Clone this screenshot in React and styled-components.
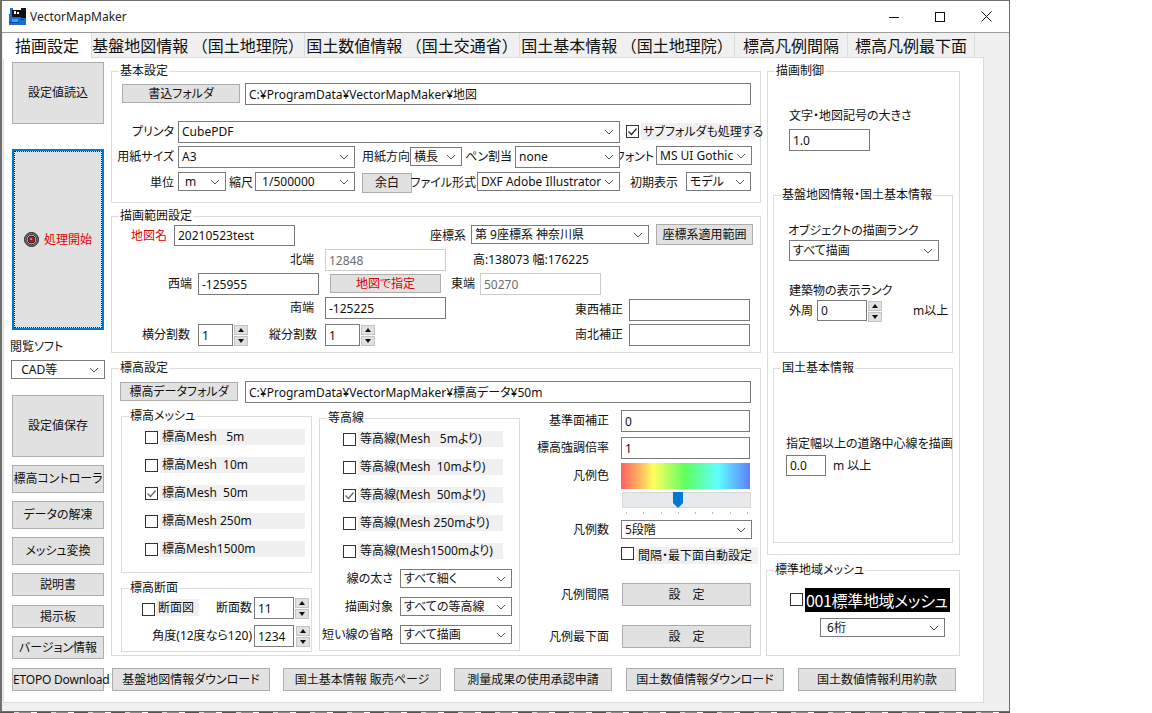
import React from "react";
import styled, { createGlobalStyle, css } from "styled-components";

const Global = createGlobalStyle`
  html, body { margin: 0; padding: 0; background: #fff; }
  body { font: 12px/16px "Noto Sans", "Noto Sans CJK JP", sans-serif; color: #111; font-feature-settings: "palt"; }
  * { box-sizing: border-box; }
`;

const place = css`
  flex: none;
  margin-left: ${(p) => p.$ml || 0}px;
  margin-top: ${(p) => p.$mt || 0}px;
`;

const Window = styled.div`
  width: 1010px; height: 712px;
  border: 1px solid #6e6e6e;
  border-left-width: 2px;
  background: #f0f0f0;
  display: flex; flex-direction: column;
  margin-left: 0;
`;
const NoiseStrip = styled.div`
  width: 1010px; height: 1px;
  background: repeating-linear-gradient(90deg, #555 0 14px, #ddd 14px 19px, #888 19px 31px, #fff 31px 37px);
`;
const TitleBar = styled.div`
  height: 32px; background: #fff; border-bottom: 1px solid #9c9c9c;
  display: flex; align-items: center; padding-left: 7px; flex: none;
`;
const TitleText = styled.span`
  margin-left: 4px; font-size: 12px; color: #222; flex: 1;
`;
const WinBtn = styled.span`
  width: 46px; height: 31px; display: flex; align-items: center; justify-content: center; flex: none;
`;
const TabStrip = styled.div`
  height: 24px; display: flex; padding-left: 1px; flex: none;
`;
const Tab = styled.div`
  width: ${(p) => p.$w}px;
  height: ${(p) => (p.$active ? 26 : 24)}px;
  background: ${(p) => (p.$active ? "#fff" : "#f0f0f0")};
  border-right: 1px solid #dcdcdc;
  font-family: "Noto Sans CJK JP", sans-serif;
  font-feature-settings: normal;
  font-size: 16px; line-height: 24px; text-align: center; white-space: pre;
  position: relative; z-index: 1; color: #111;
`;
const Panel = styled.div`
  width: 981px; height: 646px; margin-left: 1px; background: #fff;
  border: 1px solid #dcdcdc; padding: 4px 0 0 8px; flex: none;
`;
const Upper = styled.div`
  display: flex; height: 598px;
`;
const LeftCol = styled.div`
  width: 94px; margin-left: -1px; display: flex; flex-direction: column; flex: none;
`;
const CenterCol = styled.div`
  width: 650px; margin-left: 6px; padding-top: 9px; flex: none;
`;
const RightCol = styled.div`
  width: 194px; margin-left: 5px; padding-top: 9px; flex: none;
`;
const BottomBar = styled.div`
  display: flex; margin-top: 8px;
`;
const Btn = styled.button`
  ${place};
  width: ${(p) => p.$w}px; height: ${(p) => p.$h}px;
  background: #e1e1e1; border: 1px solid #adadad; padding: 0;
  font: inherit; font-size: 12px; color: ${(p) => (p.$red ? "#e00000" : "#111")};
  font-feature-settings: "palt"; letter-spacing: ${(p) => p.$ls || 0}px; white-space: pre;
`;
const StartBtn = styled.button`
  ${place};
  width: 92px; height: 181px; background: #e1e1e1; border: 2px solid #0078d7;
  outline: 1px dotted #222; outline-offset: -3px; padding: 0;
  display: flex; align-items: center; justify-content: center;
  font: inherit; color: #e00000; font-feature-settings: "palt"; 
`;
const StartText = styled.span`
  margin-left: 5px; width: 48px; white-space: nowrap;
`;
const Field = styled.div`
  ${place};
  position: relative;
  width: ${(p) => p.$w}px; height: ${(p) => p.$h}px;
  border: 1px solid #dcdcdc;
  padding-top: ${(p) => p.$pt || 0}px;
`;
const Legend = styled.span`
  position: absolute; top: -9px; left: ${(p) => p.$left ?? 7}px;
  background: #fff; padding: 0 1px; white-space: nowrap; letter-spacing: ${(p) => p.$ls || 0}px;
`;
const Row = styled.div`
  display: flex; align-items: flex-start;
  height: ${(p) => p.$h}px;
  margin-top: ${(p) => p.$mt || 0}px;
  margin-left: ${(p) => p.$ml || 0}px;
`;
const Label = styled.span`
  ${place};
  width: ${(p) => p.$w}px; height: ${(p) => p.$h ? p.$h + "px" : "100%"};
  display: flex; align-items: center;
  justify-content: ${(p) => (p.$left ? "flex-start" : "flex-end")};
  white-space: pre; letter-spacing: ${(p) => p.$ls || 0}px;
  color: ${(p) => (p.$red ? "#e00000" : "inherit")};
`;
const Plain = styled.div`
  ${place};
  height: 16px; white-space: pre; letter-spacing: ${(p) => p.$ls || 0}px;
`;
const Input = styled.input`
  ${place};
  width: ${(p) => p.$w}px; height: ${(p) => p.$h || 22}px;
  border: 1px solid ${(p) => (p.$dis ? "#cccccc" : "#7a7a7a")};
  background: #fff; padding: 0 0 0 3px; outline: none;
  font: inherit; color: ${(p) => (p.$dis ? "#6d6d6d" : "#111")};
  font-feature-settings: "palt"; letter-spacing: ${(p) => p.$ls || 0}px;
`;
const SelectBox = styled.div`
  ${place};
  width: ${(p) => p.$w}px; height: ${(p) => p.$h || 19}px;
  border: 1px solid #7a7a7a; background: #fff;
  display: flex; align-items: center; padding-left: 3px;
  white-space: pre; position: relative; letter-spacing: ${(p) => p.$ls || 0}px;
`;
const ChevronWrap = styled.svg`
  position: absolute; right: 5px; top: 50%; margin-top: -3px;
`;
const Select = ({ children, ...rest }) => (
  <SelectBox {...rest}>
    {children}
    <ChevronWrap width="10" height="6" viewBox="0 0 10 6">
      <path d="M1 1l4 4 4-4" fill="none" stroke="#555" strokeWidth="1" />
    </ChevronWrap>
  </SelectBox>
);
const SpinBox = styled.div`
  ${place};
  width: 14px; height: 22px; display: flex; flex-direction: column; gap: 1px; padding-top: 1px;
`;
const SpinPart = styled.span`
  flex: 1; background: #e1e1e1; border: 1px solid #c4c4c4;
  display: flex; align-items: center; justify-content: center;
`;
const Tri = styled.i`
  width: 0; height: 0; border-left: 3.5px solid transparent; border-right: 3.5px solid transparent;
  ${(p) => (p.$up ? "border-bottom: 4px solid #111;" : "border-top: 4px solid #111;")}
`;
const Spin = (props) => (
  <SpinBox {...props}>
    <SpinPart><Tri $up /></SpinPart>
    <SpinPart><Tri /></SpinPart>
  </SpinBox>
);
const CheckBox = styled.svg`
  ${place};
  display: block;
`;
const Check = ({ on, tone = "#666", ...rest }) => (
  <CheckBox width="13" height="13" viewBox="0 0 13 13" {...rest}>
    <rect x="0.5" y="0.5" width="12" height="12" fill="#fff" stroke="#333" />
    {on && <path d="M2.5 6.5l3 3 5-6" fill="none" stroke={tone} strokeWidth="1.2" />}
  </CheckBox>
);
const CheckLabel = styled.span`
  ${place};
  width: ${(p) => p.$w}px; height: ${(p) => p.$h || 16}px;
  background: #f0f0f0; padding-left: 2px;
  display: flex; align-items: center; white-space: pre; letter-spacing: ${(p) => p.$ls || 0}px;
`;
const CheckRow = styled.div`
  display: flex; align-items: center; height: 16px; padding-left: 23px;
  margin-bottom: 12px;
`;
const Gradient = styled.div`
  ${place};
  width: 129px; height: 26px;
  background: linear-gradient(90deg, #ff5f5f 0%, #ffa75f 12%, #ffff5f 25%, #5fff5f 50%, #5fffff 75%, #5f7fff 100%);
`;
const Track = styled.div`
  ${place};
  position: relative; width: 129px; height: 16px; background: #e7e9ea; border: 1px solid #d6d6d6;
`;
const Thumb = styled.svg`
  position: absolute; left: 50px; top: -1px;
`;
const Ticks = styled.div`
  ${place};
  width: 122px; height: 2px; display: flex; justify-content: space-between;
`;
const TickMark = styled.i`
  width: 1px; height: 2px; background: #bdbdbd;
`;
const BlackLabel = styled.div`
  ${place};
  width: 145px; height: 24px; background: #000; color: #fff;
  font-size: 16px; line-height: 24px; padding-left: 1px; white-space: pre;
  font-family: "Noto Sans CJK JP", sans-serif; letter-spacing: -0.35px;
`;

const AppIcon = () => (
  <svg width="17" height="17" viewBox="0 0 17 17" style={{ flex: "none" }}>
    <rect x="0" y="6" width="17" height="11" fill="#1b6fd0" />
    <rect x="1" y="0" width="3" height="8" fill="#1b6fd0" />
    <rect x="12" y="0" width="5" height="10" fill="#111" />
    <rect x="3" y="2" width="9" height="7" fill="#111" />
    <rect x="5" y="3" width="2" height="3" fill="#fff" />
    <rect x="8" y="4" width="2" height="2" fill="#fff" />
    <rect x="3" y="11" width="6" height="3" fill="#3fa0ff" />
    <rect x="0" y="14" width="10" height="1" fill="#0b3f86" />
    <rect x="11" y="11" width="4" height="1" fill="#0b3f86" />
  </svg>
);
const TargetIcon = () => (
  <svg width="15" height="15" viewBox="0 0 15 15" style={{ flex: "none" }}>
    <circle cx="7.5" cy="7.5" r="7" fill="#777" stroke="#222" />
    <circle cx="7.5" cy="7.5" r="5" fill="#e4e4e4" stroke="#333" />
    <circle cx="7.5" cy="7.5" r="3.5" fill="#d40c18" stroke="#222" />
    <circle cx="7" cy="7" r="1" fill="#ff8a8a" />
  </svg>
);

const meshRows = [
  ["標高Mesh   5m", false],
  ["標高Mesh  10m", false],
  ["標高Mesh  50m", true],
  ["標高Mesh 250m", false],
  ["標高Mesh1500m", false],
];
const contourRows = [
  ["等高線(Mesh   5mより)", false],
  ["等高線(Mesh  10mより)", false],
  ["等高線(Mesh  50mより)", true],
  ["等高線(Mesh 250mより)", false],
  ["等高線(Mesh1500mより)", false],
];

export default function App() {
  return (
    <>
      <Global />
      <Window>
        <TitleBar>
          <AppIcon />
          <TitleText>VectorMapMaker</TitleText>
          <WinBtn>
            <svg width="10" height="10" viewBox="0 0 10 10"><path d="M0 5.5h10" stroke="#111" fill="none" /></svg>
          </WinBtn>
          <WinBtn>
            <svg width="10" height="10" viewBox="0 0 10 10"><rect x="0.5" y="0.5" width="9" height="9" stroke="#111" fill="none" /></svg>
          </WinBtn>
          <WinBtn>
            <svg width="11" height="11" viewBox="0 0 11 11"><path d="M0.5 0.5l10 10M10.5 0.5l-10 10" stroke="#111" fill="none" /></svg>
          </WinBtn>
        </TitleBar>
        <TabStrip>
          <Tab $w={89} $active>描画設定</Tab>
          <Tab $w={213}>基盤地図情報 （国土地理院）</Tab>
          <Tab $w={215}>国土数値情報 （国土交通省）</Tab>
          <Tab $w={215}>国土基本情報 （国土地理院）</Tab>
          <Tab $w={113}>標高凡例間隔</Tab>
          <Tab $w={127}>標高凡例最下面</Tab>
        </TabStrip>
        <Panel>
          <Upper>
            <LeftCol>
              <Btn $ml={1} $w={92} $h={62}>設定値読込</Btn>
              <StartBtn $ml={1} $mt={25}>
                <TargetIcon />
                <StartText>処理開始</StartText>
              </StartBtn>
              <Plain $mt={9} $ml={-1}>閲覧ソフト</Plain>
              <Select $w={94} $h={19} $mt={5}>  CAD等</Select>
              <Btn $ml={1} $mt={16} $w={92} $h={62}>設定値保存</Btn>
              <Btn $ml={1} $mt={8} $w={92} $h={28}>標高コントローラ</Btn>
              <Btn $ml={1} $mt={8} $w={92} $h={28}>データの解凍</Btn>
              <Btn $ml={1} $mt={8} $w={92} $h={28}>メッシュ変換</Btn>
              <Btn $ml={1} $mt={8} $w={92} $h={23}>説明書</Btn>
              <Btn $ml={1} $mt={9} $w={92} $h={23}>掲示板</Btn>
              <Btn $ml={1} $mt={8} $w={92} $h={23}>バージョン情報</Btn>
            </LeftCol>

            <CenterCol>
              <Field $w={650} $h={132} $pt={11}>
                <Legend>基本設定</Legend>
                <Row $h={22}>
                  <Btn $ml={10} $mt={1} $w={118} $h={19}>書込フォルダ</Btn>
                  <Input $ml={5} $w={506} readOnly value="C:¥ProgramData¥VectorMapMaker¥地図" />
                </Row>
                <Row $h={22} $mt={16}>
                  <Label $w={62}>プリンタ</Label>
                  <Select $ml={4} $w={442} $h={22}>CubePDF</Select>
                  <Check $ml={6} $mt={4} on tone="#222" />
                  <CheckLabel $ml={2} $mt={2} $w={114} $h={17}>サブフォルダも処理する</CheckLabel>
                </Row>
                <Row $h={22} $mt={3}>
                  <Label $w={62}>用紙サイズ</Label>
                  <Select $ml={4} $w={177} $h={22}>A3</Select>
                  <Label $ml={6} $w={49}>用紙方向</Label>
                  <Select $mt={1} $w={52}>横長</Select>
                  <Label $ml={6} $w={44}>ペン割当</Label>
                  <Select $ml={3} $w={105} $h={22}>none</Select>
                  <Label $ml={2} $w={32}>フォント</Label>
                  <Select $ml={2} $w={96}>MS UI Gothic</Select>
                </Row>
                <Row $h={21} $mt={4}>
                  <Label $w={62}>単位</Label>
                  <Select $ml={4} $w={48}> m</Select>
                  <Label $ml={4} $w={23}>縮尺</Label>
                  <Select $ml={2} $w={100}> 1/500000</Select>
                  <Btn $ml={7} $mt={1} $w={50} $h={20}>余白</Btn>
                  <Label $ml={5} $w={59}>ファイル形式</Label>
                  <Select $ml={1} $w={143}>DXF Adobe Illustrator</Select>
                  <Label $ml={11} $w={47}>初期表示</Label>
                  <Select $ml={8} $w={65}>モデル</Select>
                </Row>
              </Field>

              <Field $w={650} $h={137} $mt={13} $pt={8}>
                <Legend>描画範囲設定</Legend>
                <Row $h={21}>
                  <Label $w={55} $red>地図名</Label>
                  <Input $ml={7} $w={121} $h={21} readOnly value="20210523test" />
                  <Label $ml={135} $w={36}>座標系</Label>
                  <Select $ml={5} $w={178}>第 9座標系 神奈川県</Select>
                  <Btn $ml={7} $mt={-1} $w={97} $h={21}>座標系適用範囲</Btn>
                </Row>
                <Row $h={22} $mt={3}>
                  <Label $w={202}>北端</Label>
                  <Input $ml={11} $w={121} $dis readOnly value="12848" />
                  <Label $ml={27} $w={125} $left>高:138073 幅:176225</Label>
                </Row>
                <Row $h={22} $mt={2}>
                  <Label $w={80}>西端</Label>
                  <Input $ml={6} $w={121} readOnly value="-125955" />
                  <Btn $ml={11} $mt={1} $w={111} $h={19} $red>地図で指定</Btn>
                  <Label $ml={10} $w={24}>東端</Label>
                  <Input $ml={5} $w={121} $dis readOnly value="50270" />
                </Row>
                <Row $h={24} $mt={2}>
                  <Label $w={202} $h={22}>南端</Label>
                  <Input $ml={11} $w={121} readOnly value="-125225" />
                  <Label $ml={130} $w={47} $h={22} $mt={2}>東西補正</Label>
                  <Input $ml={6} $mt={2} $w={121} readOnly value="" />
                </Row>
                <Row $h={22} $mt={3}>
                  <Label $w={78}>横分割数</Label>
                  <Input $ml={8} $w={35} readOnly value="1" />
                  <Spin $ml={1} />
                  <Label $ml={20} $w={49}>縦分割数</Label>
                  <Input $ml={8} $w={35} readOnly value="1" />
                  <Spin $ml={1} />
                  <Label $ml={201} $w={47}>南北補正</Label>
                  <Input $ml={6} $w={121} readOnly value="" />
                </Row>
              </Field>

              <Field $w={650} $h={288} $mt={15} $pt={12}>
                <Legend>標高設定</Legend>
                <Row $h={22}>
                  <Btn $ml={8} $mt={1} $w={118} $h={19}>標高データフォルダ</Btn>
                  <Input $ml={7} $w={506} readOnly value="C:¥ProgramData¥VectorMapMaker¥標高データ¥50m" />
                </Row>
                <Row $h={250}>
                  <div style={{ flex: "none" }}>
                    <Field $ml={9} $mt={13} $w={191} $h={157} $pt={12}>
                      <Legend>標高メッシュ</Legend>
                      {meshRows.map(([t, on]) => (
                        <CheckRow key={t}>
                          <Check on={on} />
                          <CheckLabel $ml={2} $w={145}>{t}</CheckLabel>
                        </CheckRow>
                      ))}
                    </Field>
                    <Field $ml={9} $mt={15} $w={191} $h={64} $pt={8}>
                      <Legend>標高断面</Legend>
                      <Row $h={22}>
                        <Check $ml={20} $mt={6} />
                        <CheckLabel $ml={1} $mt={2} $w={43} $h={17}>断面図</CheckLabel>
                        <Label $ml={17} $w={36}>断面数</Label>
                        <Input $ml={2} $w={40} readOnly value="11" />
                        <Spin $ml={1} />
                      </Row>
                      <Row $h={22} $mt={6}>
                        <Label $w={130}>角度(12度なら120)</Label>
                        <Input $ml={2} $w={40} readOnly value="1234" />
                        <Spin $ml={2} />
                      </Row>
                    </Field>
                  </div>
                  <Field $ml={7} $mt={15} $w={201} $h={233} $pt={12}>
                    <Legend>等高線</Legend>
                    {contourRows.map(([t, on]) => (
                      <CheckRow key={t}>
                        <Check on={on} />
                        <CheckLabel $ml={2} $w={145}>{t}</CheckLabel>
                      </CheckRow>
                    ))}
                    <Row $h={19} $mt={-2}>
                      <Label $w={73}>線の太さ</Label>
                      <Select $ml={7} $w={112}>すべて細く</Select>
                    </Row>
                    <Row $h={19} $mt={9}>
                      <Label $w={73}>描画対象</Label>
                      <Select $ml={7} $w={112}>すべての等高線</Select>
                    </Row>
                    <Row $h={19} $mt={9}>
                      <Label $w={73}>短い線の省略</Label>
                      <Select $ml={7} $w={112}>すべて描画</Select>
                    </Row>
                  </Field>
                  <div style={{ flex: "none", paddingTop: 7 }}>
                    <Row $h={22}>
                      <Label $w={89}>基準面補正</Label>
                      <Input $ml={12} $w={129} readOnly value="0" />
                    </Row>
                    <Row $h={22} $mt={5}>
                      <Label $w={89}>標高強調倍率</Label>
                      <Input $ml={12} $w={129} readOnly value="1" />
                    </Row>
                    <Row $h={26} $mt={4}>
                      <Label $w={89}>凡例色</Label>
                      <Gradient $ml={12} />
                    </Row>
                    <Track $ml={102} $mt={3}>
                      <Thumb width="10" height="16" viewBox="0 0 10 16">
                        <path d="M0 0h10v11l-5 5-5-5z" fill="#0078d7" />
                      </Thumb>
                    </Track>
                    <Ticks $ml={106} $mt={4}>
                      {Array.from({ length: 8 }, (_, i) => <TickMark key={i} />)}
                    </Ticks>
                    <Row $h={19} $mt={6}>
                      <Label $w={89}>凡例数</Label>
                      <Select $ml={12} $w={131}>5段階</Select>
                    </Row>
                    <Row $h={17} $mt={8}>
                      <Check $ml={101} />
                      <CheckLabel $ml={2} $w={122} $h={17}>間隔・最下面自動設定</CheckLabel>
                    </Row>
                    <Row $h={23} $mt={19}>
                      <Label $w={89}>凡例間隔</Label>
                      <Btn $ml={13} $w={129} $h={23}>設　定</Btn>
                    </Row>
                    <Row $h={23} $mt={19}>
                      <Label $w={89}>凡例最下面</Label>
                      <Btn $ml={13} $w={129} $h={23}>設　定</Btn>
                    </Row>
                  </div>
                </Row>
              </Field>
            </CenterCol>

            <RightCol>
              <Field $ml={1} $w={193} $h={484}>
                <Legend>描画制御</Legend>
                <Plain $ml={21} $mt={36}>文字・地図記号の大きさ</Plain>
                <Input $ml={21} $mt={5} $w={81} readOnly value="1.0" />
                <Field $ml={5} $mt={44} $w={180} $h={158}>
                  <Legend>基盤地図情報・国土基本情報</Legend>
                  <Plain $ml={14} $mt={27}>オブジェクトの描画ランク</Plain>
                  <Select $ml={15} $mt={1} $w={150} $h={21}>すべて描画</Select>
                  <Plain $ml={15} $mt={22}>建築物の表示ランク</Plain>
                  <Row $h={21} $mt={1}>
                    <Label $ml={15} $w={28} $left>外周</Label>
                    <Input $w={50} $h={21} readOnly value="0" />
                    <Spin $ml={1} />
                    <Label $ml={31} $w={36} $left>m以上</Label>
                  </Row>
                </Field>
                <Field $ml={5} $mt={15} $w={180} $h={175}>
                  <Legend>国土基本情報</Legend>
                  <Plain $ml={12} $mt={67}>指定幅以上の道路中心線を描画</Plain>
                  <Row $h={21} $mt={3}>
                    <Input $ml={12} $w={40} $h={21} readOnly value="0.0" />
                    <Label $ml={7} $w={40} $left>m 以上</Label>
                  </Row>
                </Field>
              </Field>
              <Field $w={194} $h={86} $mt={15} $pt={17}>
                <Legend>標準地域メッシュ</Legend>
                <Row $h={24}>
                  <Check $ml={23} $mt={5} />
                  <BlackLabel $ml={2}>001標準地域メッシュ</BlackLabel>
                </Row>
                <Select $ml={53} $mt={6} $w={125}> 6桁</Select>
              </Field>
            </RightCol>
          </Upper>
          <BottomBar>
            <Btn $w={92} $h={23} $ls={-0.2}>ETOPO Download</Btn>
            <Btn $ml={8} $w={158} $h={23}>基盤地図情報ダウンロード</Btn>
            <Btn $ml={13} $w={158} $h={23}>国土基本情報 販売ページ</Btn>
            <Btn $ml={13} $w={158} $h={23}>測量成果の使用承認申請</Btn>
            <Btn $ml={14} $w={158} $h={23}>国土数値情報ダウンロード</Btn>
            <Btn $ml={14} $w={158} $h={23}>国土数値情報利用約款</Btn>
          </BottomBar>
        </Panel>
      </Window>
      <NoiseStrip />
    </>
  );
}
